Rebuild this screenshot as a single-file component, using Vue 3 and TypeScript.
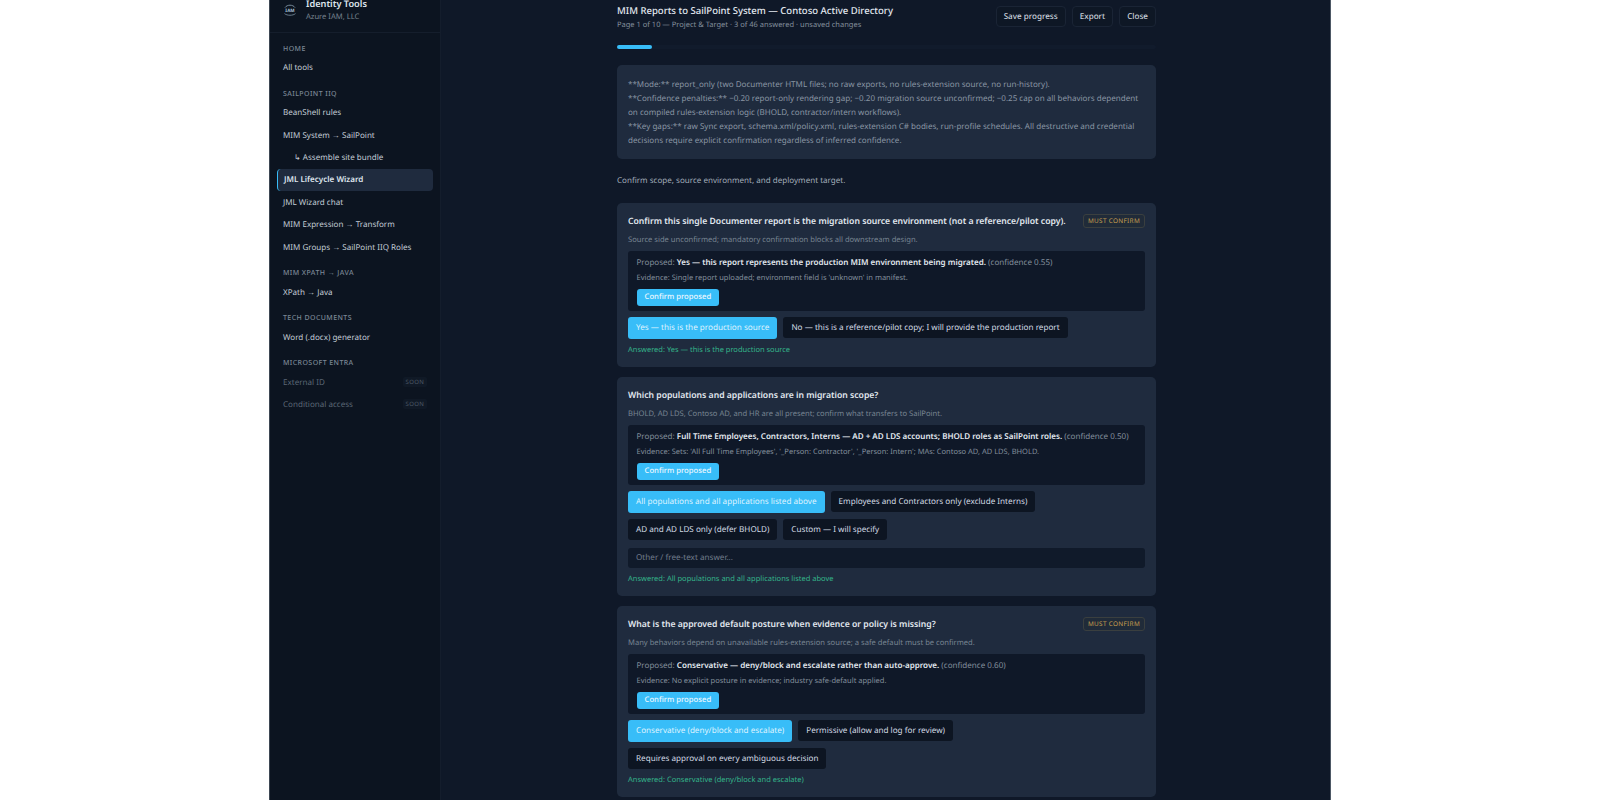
<script setup lang="ts">
interface NavItem {
  label: string;
  sub?: boolean;
  active?: boolean;
  soon?: boolean;
}
interface NavGroup {
  title: string;
  items: NavItem[];
}
interface Question {
  title: string;
  must: boolean;
  why: string;
  proposed: string;
  confidence: string;
  evidence: string;
  options: string[];
  freeText?: boolean;
}

const navGroups: NavGroup[] = [
  { title: 'Home', items: [{ label: 'All tools' }] },
  {
    title: 'SailPoint IIQ',
    items: [
      { label: 'BeanShell rules' },
      { label: 'MIM System → SailPoint' },
      { label: '↳ Assemble site bundle', sub: true },
      { label: 'JML Lifecycle Wizard', active: true },
      { label: 'JML Wizard chat' },
      { label: 'MIM Expression → Transform' },
      { label: 'MIM Groups → SailPoint IIQ Roles' },
    ],
  },
  { title: 'MIM XPath → Java', items: [{ label: 'XPath → Java' }] },
  { title: 'Tech documents', items: [{ label: 'Word (.docx) generator' }] },
  {
    title: 'Microsoft Entra',
    items: [
      { label: 'External ID', soon: true },
      { label: 'Conditional access', soon: true },
    ],
  },
];

const questions: Question[] = [
  {
    title: 'Confirm this single Documenter report is the migration source environment (not a reference/pilot copy).',
    must: true,
    why: 'Source side unconfirmed; mandatory confirmation blocks all downstream design.',
    proposed: 'Yes — this report represents the production MIM environment being migrated.',
    confidence: '0.55',
    evidence: "Single report uploaded; environment field is 'unknown' in manifest.",
    options: ['Yes — this is the production source', 'No — this is a reference/pilot copy; I will provide the production report'],
  },
  {
    title: 'Which populations and applications are in migration scope?',
    must: false,
    why: 'BHOLD, AD LDS, Contoso AD, and HR are all present; confirm what transfers to SailPoint.',
    proposed: 'Full Time Employees, Contractors, Interns — AD + AD LDS accounts; BHOLD roles as SailPoint roles.',
    confidence: '0.50',
    evidence: "Sets: 'All Full Time Employees', '_Person: Contractor', '_Person: Intern'; MAs: Contoso AD, AD LDS, BHOLD.",
    options: [
      'All populations and all applications listed above',
      'Employees and Contractors only (exclude Interns)',
      'AD and AD LDS only (defer BHOLD)',
      'Custom — I will specify',
    ],
    freeText: true,
  },
  {
    title: 'What is the approved default posture when evidence or policy is missing?',
    must: true,
    why: 'Many behaviors depend on unavailable rules-extension source; a safe default must be confirmed.',
    proposed: 'Conservative — deny/block and escalate rather than auto-approve.',
    confidence: '0.60',
    evidence: 'No explicit posture in evidence; industry safe-default applied.',
    options: [
      'Conservative (deny/block and escalate)',
      'Permissive (allow and log for review)',
      'Requires approval on every ambiguous decision',
    ],
  },
];
</script>

<template>
  <div class="page">
    <div class="shell">
      <aside class="sidebar">
        <div class="brand">
          <svg class="logo" width="14" height="12" viewBox="0 0 14 12" fill="none">
            <path d="M2 3.6 C4 0.4 10 0.4 12 3.6" stroke="#8fa6b8" stroke-width="0.8" />
            <path d="M1.5 9.6 C4 11.8 10 11.8 12.5 9.6" stroke="#8fa6b8" stroke-width="0.7" />
            <text x="7" y="8.2" text-anchor="middle" class="logo-text">IAM</text>
          </svg>
          <div>
            <div class="brand-name">Identity Tools</div>
            <div class="brand-sub">Azure IAM, LLC</div>
          </div>
        </div>
        <nav class="nav">
          <section v-for="group in navGroups" :key="group.title" class="nav-group">
            <div class="nav-title">{{ group.title }}</div>
            <div
              v-for="item in group.items"
              :key="item.label"
              class="nav-item"
              :class="{ sub: item.sub, active: item.active, soon: item.soon }"
            >
              <span>{{ item.label }}</span>
              <span v-if="item.soon" class="soon-tag">SOON</span>
            </div>
          </section>
        </nav>
      </aside>

      <main class="main">
        <div class="column">
          <header class="top">
            <div>
              <h1 class="title">MIM Reports to SailPoint System — Contoso Active Directory</h1>
              <div class="subtitle">Page 1 of 10 — Project &amp; Target · 3 of 46 answered · unsaved changes</div>
            </div>
            <div class="actions">
              <button class="ghost">Save progress</button>
              <button class="ghost">Export</button>
              <button class="ghost">Close</button>
            </div>
          </header>

          <div class="progress"><div class="progress-fill"></div></div>

          <div class="notes">
            <div>**Mode:** report_only (two Documenter HTML files; no raw exports, no rules-extension source, no run-history).</div>
            <div>**Confidence penalties:** −0.20 report-only rendering gap; −0.20 migration source unconfirmed; −0.25 cap on all behaviors dependent on compiled rules-extension logic (BHOLD, contractor/intern workflows).</div>
            <div>**Key gaps:** raw Sync export, schema.xml/policy.xml, rules-extension C# bodies, run-profile schedules. All destructive and credential decisions require explicit confirmation regardless of inferred confidence.</div>
          </div>

          <p class="intro">Confirm scope, source environment, and deployment target.</p>

          <article v-for="q in questions" :key="q.title" class="card">
            <div class="card-head">
              <h2 class="q-title">{{ q.title }}</h2>
              <span v-if="q.must" class="must">MUST CONFIRM</span>
            </div>
            <p class="why">{{ q.why }}</p>
            <div class="proposal">
              <div class="prop-line">
                Proposed: <strong>{{ q.proposed }}</strong> (confidence {{ q.confidence }})
              </div>
              <div class="evidence">Evidence: {{ q.evidence }}</div>
              <button class="confirm">Confirm proposed</button>
            </div>
            <div class="options">
              <button
                v-for="(opt, i) in q.options"
                :key="opt"
                class="option"
                :class="{ selected: i === 0 }"
              >{{ opt }}</button>
            </div>
            <div v-if="q.freeText" class="free-text">Other / free-text answer...</div>
            <div class="answered">Answered: {{ q.options[0] }}</div>
          </article>
        </div>
      </main>
    </div>
  </div>
</template>

<style>
html,
body {
  margin: 0;
  background: #ffffff;
  overflow: hidden;
}
</style>

<style scoped>
.page {
  height: 800px;
  overflow: hidden;
  background: #ffffff;
  font-family: "Noto Sans", sans-serif;
  text-rendering: geometricPrecision;
}

.page button {
  text-rendering: geometricPrecision;
}

.shell {
  box-sizing: border-box;
  width: 1062px;
  height: 1000px;
  margin: -14px 0 0 269px;
  display: flex;
  background: #0f1828;
  border-left: 1px solid #3e4854;
  border-right: 1px solid #4d5865;
}

.sidebar {
  width: 171px;
  flex-shrink: 0;
  box-sizing: border-box;
  background: #0c1420;
  border-right: 1px solid #141d2c;
}

.brand {
  display: flex;
  align-items: center;
  gap: 9px;
  height: 44px;
  padding: 2px 12px 0 13px;
  border-bottom: 1px solid #151e2c;
}

.logo {
  flex-shrink: 0;
}

.logo-text {
  font-size: 4.6px;
  font-weight: 700;
  fill: #a9c2d6;
}

.brand-name {
  font-size: 9.2px;
  font-weight: 600;
  line-height: 15px;
  color: #dfe6ee;
}

.brand-sub {
  font-size: 7.6px;
  line-height: 13px;
  color: #77838f;
}

.nav {
  padding: 1px 7px 0;
}

.nav-group {
  margin-top: 8.6px;
}

.nav-title {
  padding: 0 6px;
  height: 14px;
  line-height: 14px;
  font-size: 7px;
  font-weight: 500;
  letter-spacing: 0.06em;
  text-transform: uppercase;
  color: #7b8795;
}

.nav-item {
  display: flex;
  justify-content: space-between;
  align-items: center;
  box-sizing: border-box;
  height: 22.4px;
  padding: 0 6px;
  font-size: 8.05px;
  color: #c3ccd6;
  border-radius: 4px;
}

.nav-item.sub {
  padding-left: 17px;
}

.nav-item.active {
  background: #1f2b3e;
  border-left: 1px solid #38bdf8;
  font-weight: 600;
  color: #dfe6ee;
}

.nav-item.soon {
  color: #5b6775;
}

.soon-tag {
  font-size: 6px;
  letter-spacing: 0.05em;
  color: #4e5967;
  background: #101926;
  padding: 1px 3px;
  border-radius: 2px;
}

.main {
  flex: 1;
  display: flex;
  justify-content: center;
  padding-left: 2px;
}

.column {
  width: 539px;
  padding-top: 14px;
}

.top {
  display: flex;
  justify-content: space-between;
  align-items: flex-start;
  height: 38px;
}

.title {
  margin: 0;
  padding-top: 4px;
  font-size: 9.55px;
  line-height: 14px;
  font-weight: 500;
  color: #e3e9f0;
}

.subtitle {
  margin-top: 1px;
  font-size: 7.5px;
  line-height: 12px;
  color: #838f9c;
}

.actions {
  display: flex;
  gap: 6px;
  margin-top: 6px;
}

.ghost {
  height: 21px;
  padding: 0 7px;
  font: 500 8.1px "Noto Sans", sans-serif;
  color: #c9d2dc;
  background: #0e1725;
  border: 1px solid #1a2435;
  border-radius: 4px;
}

.progress {
  height: 4px;
  margin-top: 7px;
  background: #111b2c;
  border-radius: 2px;
}

.progress-fill {
  width: 35px;
  height: 100%;
  background: #38bdf8;
  border-radius: 2px;
}

.notes {
  box-sizing: border-box;
  margin-top: 16px;
  padding: 12.5px 11px 11px;
  background: #1f2b3e;
  border-radius: 5px;
  font-size: 8.05px;
  line-height: 14px;
  color: #8a96a4;
}

.intro {
  margin: 15px 0 0;
  font-size: 8.05px;
  line-height: 14px;
  color: #a2adb9;
}

.card {
  box-sizing: border-box;
  margin-top: 15px;
  padding: 11px 11px 10px;
  background: #1f2b3e;
  border-radius: 5px;
}

.card + .card {
  margin-top: 10px;
}

.card-head {
  display: flex;
  justify-content: space-between;
  align-items: flex-start;
  min-height: 15px;
}

.q-title {
  margin: 0;
  font-size: 8.65px;
  line-height: 15px;
  font-weight: 600;
  color: #e3e9f0;
}

.must {
  flex-shrink: 0;
  height: 14px;
  box-sizing: border-box;
  line-height: 12px;
  padding: 0 4px;
  font-size: 6.4px;
  letter-spacing: 0.05em;
  white-space: nowrap;
  color: #c9a050;
  background: #202b39;
  border: 1px solid #3a3f3f;
  border-radius: 3px;
}

.why {
  margin: 5px 0 0;
  font-size: 7.6px;
  line-height: 12px;
  color: #788592;
}

.proposal {
  margin-top: 5px;
  padding: 5px 8.5px;
  background: #0f1828;
  border-radius: 3px;
}

.prop-line {
  font-size: 8.05px;
  line-height: 14px;
  color: #838f9c;
}

.prop-line strong {
  font-weight: 600;
  color: #e3e9f0;
}

.evidence {
  margin-top: 2px;
  font-size: 7.5px;
  line-height: 12px;
  color: #838f9c;
}

.confirm {
  display: block;
  height: 17px;
  margin-top: 5px;
  padding: 0 8px;
  font: 500 7.7px "Noto Sans", sans-serif;
  color: #ecf8ff;
  background: #38bdf8;
  border: none;
  border-radius: 3px;
}

.options {
  display: flex;
  flex-wrap: wrap;
  align-items: center;
  gap: 6px;
  margin-top: 6px;
}

.option {
  height: 21px;
  padding: 0 8px;
  font: 400 8.15px "Noto Sans", sans-serif;
  color: #d3dbe4;
  background: #0d1522;
  border: none;
  border-radius: 3px;
}

.option.selected {
  height: 22px;
  color: #dff3ff;
  background: #38bdf8;
}

.free-text {
  box-sizing: border-box;
  height: 20px;
  line-height: 20px;
  margin-top: 8px;
  padding: 0 8px;
  font-size: 8.15px;
  color: #707c8a;
  background: #101a2a;
  border-radius: 3px;
}

.answered {
  margin-top: 5px;
  font-size: 7.5px;
  line-height: 13px;
  color: #34b48a;
}
</style>
